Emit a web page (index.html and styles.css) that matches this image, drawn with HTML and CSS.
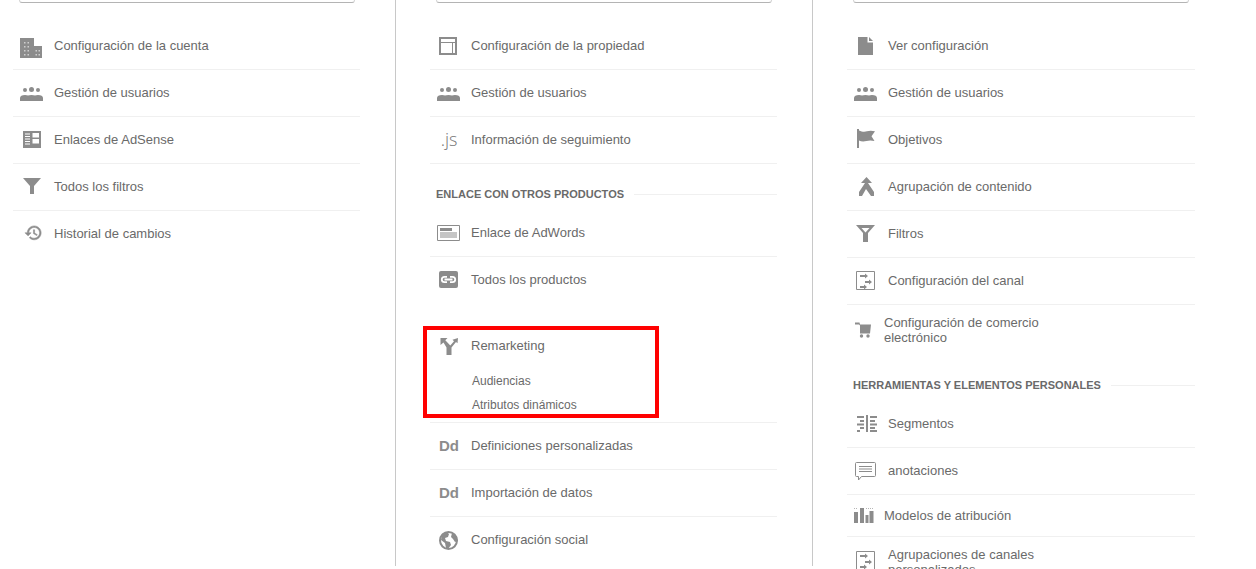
FILE: index.html
```html
<!DOCTYPE html>
<html lang="es">
<head>
<meta charset="utf-8">
<title>Administrar</title>
<link rel="stylesheet" href="styles.css">
</head>
<body>
<svg class="sprite" xmlns="http://www.w3.org/2000/svg">
  <symbol id="i-building" viewBox="0 0 24 24">
    <path fill="#8c8c8c" d="M0 4h14v8h8v12H0z"/>
    <path fill="#cfcfcf" d="M4 8h1.500v1.500H4zM7.500 8H9v1.500H7.500zM4 12h1.500v1.500H4zM7.500 12H9v1.500H7.500zM4 16h1.500v1.500H4zM7.500 16H9v1.500H7.500zM4 20h1.500v1.500H4zM7.500 20H9v1.500H7.500zM15.500 16H17v1.500h-1.500zM18.500 16H20v1.500h-1.500zM15.500 20H17v1.500h-1.500zM18.500 20H20v1.500h-1.500z"/>
  </symbol>
  <symbol id="i-users" viewBox="0 0 24 24">
    <circle fill="#8c8c8c" cx="5" cy="9" r="2"/><circle fill="#8c8c8c" cx="11.500" cy="8.500" r="2.500"/><circle fill="#8c8c8c" cx="18" cy="9" r="2"/>
    <path fill="#8c8c8c" d="M0 20v-3c0-2 2-3 5-3 1.300 0 2.300.2 3 .5.900-.4 2.100-.6 3.500-.6s2.600.2 3.500.6c.7-.3 1.700-.5 3-.5 3 0 5 1 5 3v3z"/>
  </symbol>
  <symbol id="i-adsense" viewBox="0 0 24 24">
    <path fill="#8c8c8c" d="M3 3h18v17H3z"/>
    <path fill="#fff" d="M5 5.500h5v1H5zM5 8h5v1H5zM5 10.500h5v1H5zM5 13h5v1H5zM5 15.500h5v1H5zM12.500 5h6.500v4.500h-6.500zM12.500 11h6.500v4.500h-6.500z"/>
  </symbol>
  <symbol id="i-funnel" viewBox="0 0 24 24">
    <path fill="#8c8c8c" d="M3 3h18l-7 8v8h-4v-8z"/>
  </symbol>
  <symbol id="i-history" viewBox="0 0 24 24">
    <g transform="translate(4.200 1.600) scale(.77)">
      <path fill="#8c8c8c" stroke="#8c8c8c" stroke-width=".7" d="M13 3c-4.970 0-9 4.030-9 9H1l3.890 3.890.07.14L9 12H6c0-3.870 3.130-7 7-7s7 3.130 7 7-3.130 7-7 7c-1.930 0-3.680-.79-4.940-2.060l-1.420 1.420C8.270 19.990 10.510 21 13 21c4.970 0 9-4.030 9-9s-4.030-9-9-9zm-1 5v5l4.280 2.540.72-1.210-3.500-2.080V8H12z"/>
    </g>
  </symbol>
  <symbol id="i-property" viewBox="0 0 24 24">
    <path fill="none" stroke="#8c8c8c" stroke-width="2" d="M3 4h16v16H3z"/>
    <path fill="none" stroke="#8c8c8c" d="M3 8.500h16M15.500 8.500V20"/>
  </symbol>
  <symbol id="i-adwords" viewBox="0 0 24 24">
    <path fill="none" stroke="#8c8c8c" d="M.5 4.500h22v15H.5z"/>
    <path fill="#8c8c8c" d="M3 7h12v3H3z"/>
    <path fill="#8c8c8c" d="M3 11.500h17v1H3zM3 13.500h17v1H3zM3 15.500h17v1H3z"/>
  </symbol>
  <symbol id="i-link" viewBox="0 0 24 24">
    <rect fill="#8c8c8c" x="2" y="3" width="19" height="17" rx="2"/>
    <path fill="none" stroke="#fff" stroke-width="1.800" d="M10 8.800H7.500a2.700 2.700 0 0 0 0 5.400H10M13 8.800h2.500a2.700 2.700 0 0 1 0 5.400H13M7.500 11.500h8"/>
  </symbol>
  <symbol id="i-remarketing" viewBox="0 0 24 24">
    <path fill="#8c8c8c" d="M3.500 5h7L8.300 7.200l5 5.300 3.700-4.300-1.500-1.500 5.500-1.700-.5 5.200-1.500-1.300-4.500 5.500V22h-5v-7.500L6.500 9.500 3.500 12z"/>
  </symbol>
  <symbol id="i-globe" viewBox="0 0 24 24">
    <circle fill="#fff" stroke="#8c8c8c" stroke-width="2" cx="11.500" cy="12.500" r="8.500"/>
    <path fill="#8c8c8c" d="M5 6l5-2 2 2-1 3-3 1 1 3 4 1 1 3-3 4-2-1-1-5-4-3zM15 5l4 3 2 5-3 1-2-3-2-2z"/>
  </symbol>
  <symbol id="i-doc" viewBox="0 0 24 24">
    <path fill="#8c8c8c" d="M4 3h9.500v5.500H19V21H4zM15 3l4 4h-4z"/>
  </symbol>
  <symbol id="i-flag" viewBox="0 0 24 24">
    <path fill="#8c8c8c" d="M3 1h2v19H3zM5 2.500c3 1.500 6 1.500 8 .8 2-.7 5-.8 8 0l-3.500 5 3 4.700c-3-.8-5.500-.8-8 0-3 .8-5.500.5-7.500-.5z"/>
  </symbol>
  <symbol id="i-merge" viewBox="0 0 24 24">
    <path fill="#8c8c8c" d="M12.500 2l5.500 6h-4l6 9v4h-3l-5-7-4 7H5v-4l6-9H7z"/>
  </symbol>
  <symbol id="i-funnel-line" viewBox="0 0 24 24">
    <path fill-rule="evenodd" fill="#8c8c8c" d="M2 3h19l-7 8v9h-5v-9zM7.500 6h8l-4 4.500z"/>
  </symbol>
  <symbol id="i-channel" viewBox="0 0 24 24">
    <path fill="none" stroke="#8c8c8c" d="M2.500 2.500h18v18h-18z"/>
    <path fill="#8c8c8c" d="M6 6h5V4.500l3 2.500-3 2.500V8H6zM11 12h4v-1.500l3 2.500-3 2.500V14h-4zM6 17h4v-1.500l3 2.500-3 2.500V19H6z"/>
  </symbol>
  <symbol id="i-cart" viewBox="0 0 24 24">
    <path fill="#8c8c8c" d="M1 4.500h4.500l.5 2h11l-1 9H6V7.500L5 6.500H1z"/>
    <circle fill="#8c8c8c" cx="7.500" cy="18" r="1.700"/><circle fill="#8c8c8c" cx="14" cy="18" r="1.700"/>
  </symbol>
  <symbol id="i-segments" viewBox="0 0 24 24">
    <path fill="#8c8c8c" d="M12 3h2v17h-2zM3 4h7v2H3zM6 8h4v2H6zM3 11.500h7v2H3zM6 15h4v2H6zM3 18h3v2H3zM16 4h7v2h-7zM16 8h5v2h-5zM16 11.500h7v2h-7zM16 15h5v2h-5zM16 18h7v2h-7z"/>
  </symbol>
  <symbol id="i-note" viewBox="0 0 24 24">
    <path fill="none" stroke="#8c8c8c" d="M2.500 3.500h18a1 1 0 0 1 1 1v12a1 1 0 0 1-1 1h-13l-3 3.500v-3.500h-2a1 1 0 0 1-1-1v-12a1 1 0 0 1 1-1z"/>
    <path fill="#8c8c8c" d="M5 7h13v1H5zM5 9.500h13v1H5zM5 12h13v1H5z"/>
  </symbol>
  <symbol id="i-attrib" viewBox="0 0 24 24">
    <path fill="#8c8c8c" d="M0 8h4v11H0zM6 4h4v15H6zM11.500 11h3v8h-3zM15.500 7h4v12h-4z"/>
    <path fill="#b5b5b5" d="M0 4h1v1H0zM2 4h1v1H2zM12 4h1v1h-1zM14 4h1v1h-1zM16 4h1v1h-1zM18 4h1v1h-1z"/>
  </symbol>
</svg>

<main class="columns">
  <section class="column">
    <div class="search"></div>
    <ul class="menu">
      <li class="row"><svg class="icon"><use href="#i-building"/></svg><a class="label">Configuración de la cuenta</a></li>
      <li class="row"><svg class="icon"><use href="#i-users"/></svg><a class="label">Gestión de usuarios</a></li>
      <li class="row"><svg class="icon"><use href="#i-adsense"/></svg><a class="label">Enlaces de AdSense</a></li>
      <li class="row"><svg class="icon"><use href="#i-funnel"/></svg><a class="label">Todos los filtros</a></li>
      <li class="row row-plain"><svg class="icon"><use href="#i-history"/></svg><a class="label">Historial de cambios</a></li>
    </ul>
  </section>

  <section class="column">
    <div class="search"></div>
    <ul class="menu">
      <li class="row"><svg class="icon"><use href="#i-property"/></svg><a class="label">Configuración de la propiedad</a></li>
      <li class="row"><svg class="icon"><use href="#i-users"/></svg><a class="label">Gestión de usuarios</a></li>
      <li class="row"><span class="icon glyph-js">.js</span><a class="label">Información de seguimiento</a></li>
    </ul>
    <h2 class="heading">Enlace con otros productos</h2>
    <ul class="menu">
      <li class="row"><svg class="icon"><use href="#i-adwords"/></svg><a class="label">Enlace de AdWords</a></li>
      <li class="row row-plain"><svg class="icon"><use href="#i-link"/></svg><a class="label">Todos los productos</a></li>
    </ul>
    <div class="group">
      <div class="row row-plain row-flush"><svg class="icon"><use href="#i-remarketing"/></svg><a class="label">Remarketing</a></div>
      <a class="sub">Audiencias</a>
      <a class="sub">Atributos dinámicos</a>
      <div class="highlight"></div>
    </div>
    <ul class="menu">
      <li class="row"><span class="icon glyph-dd">Dd</span><a class="label">Definiciones personalizadas</a></li>
      <li class="row"><span class="icon glyph-dd">Dd</span><a class="label">Importación de datos</a></li>
      <li class="row row-plain"><svg class="icon"><use href="#i-globe"/></svg><a class="label">Configuración social</a></li>
    </ul>
  </section>

  <section class="column column-last">
    <div class="search"></div>
    <ul class="menu">
      <li class="row"><svg class="icon"><use href="#i-doc"/></svg><a class="label">Ver configuración</a></li>
      <li class="row"><svg class="icon"><use href="#i-users"/></svg><a class="label">Gestión de usuarios</a></li>
      <li class="row"><svg class="icon"><use href="#i-flag"/></svg><a class="label">Objetivos</a></li>
      <li class="row"><svg class="icon"><use href="#i-merge"/></svg><a class="label">Agrupación de contenido</a></li>
      <li class="row"><svg class="icon"><use href="#i-funnel-line"/></svg><a class="label">Filtros</a></li>
      <li class="row"><svg class="icon"><use href="#i-channel"/></svg><a class="label">Configuración del canal</a></li>
      <li class="row row-plain row-wrap row-narrow row-flush"><svg class="icon"><use href="#i-cart"/></svg><a class="label">Configuración de comercio electrónico</a></li>
    </ul>
    <h2 class="heading">Herramientas y elementos personales</h2>
    <ul class="menu">
      <li class="row"><svg class="icon"><use href="#i-segments"/></svg><a class="label">Segmentos</a></li>
      <li class="row"><svg class="icon"><use href="#i-note"/></svg><a class="label">anotaciones</a></li>
      <li class="row row-short row-narrow row-flush"><svg class="icon"><use href="#i-attrib"/></svg><a class="label">Modelos de atribución</a></li>
      <li class="row row-wrap row-top row-flush"><svg class="icon"><use href="#i-channel"/></svg><a class="label">Agrupaciones de canales personalizados</a></li>
    </ul>
  </section>
</main>
</body>
</html>
```

FILE: styles.css
```css
* {
  box-sizing: border-box;
}

html,
body {
  margin: 0;
  height: 100%;
  overflow: hidden;
  background: #fff;
}

body {
  font-family: "Liberation Sans", Arial, sans-serif;
  font-size: 13px;
  color: #6a6a6a;
}

.sprite {
  display: none;
}

.columns {
  display: flex;
  margin-top: -27px;
  height: 593px;
}

.column {
  flex: none;
  width: 417px;
  padding: 0 35px 0 34px;
  border-right: 1px solid #c8c8c8;
}

.column:first-child {
  width: 396px;
  padding-left: 13px;
}

.column-last {
  border-right: 0;
}

.search {
  width: 336px;
  height: 30px;
  margin: 0 0 20px 6px;
  border: 1px solid #d4d4d4;
  border-bottom-color: #b4b4b4;
  border-radius: 3px;
}

.menu {
  list-style: none;
  margin: 0;
  padding: 0;
}

.row {
  display: flex;
  align-items: center;
  height: 47px;
  border-bottom: 1px solid #f0f0f0;
}

.row-plain {
  border-bottom-color: transparent;
}

.row-wrap {
  height: 50px;
  border-bottom: 0;
}

.row-short {
  height: 42px;
}

.row-top {
  align-items: flex-start;
  padding-top: 10px;
}

.row-top .icon {
  margin-top: 2px;
}

.icon {
  flex: none;
  display: block;
  width: 24px;
  height: 24px;
  margin: 0 10px 0 7px;
  overflow: visible;
}

.row-narrow .icon {
  margin-right: 6px;
}

.label {
  max-width: 200px;
  line-height: 15px;
  position: relative;
  top: -1px;
}

.row-flush .label {
  top: 0;
}

.glyph-js {
  font-family: "Open Sans", sans-serif;
  font-weight: 300;
  font-size: 18px;
  line-height: 22px;
  color: #777;
  text-align: center;
}

.glyph-dd {
  font-weight: 700;
  font-size: 15px;
  line-height: 24px;
  color: #8c8c8c;
  text-align: center;
}

.heading {
  display: flex;
  align-items: center;
  gap: 10px;
  height: 46px;
  margin: 0;
  padding: 23px 0 9px 6px;
  font-size: 11px;
  font-weight: 700;
  line-height: 14px;
  text-transform: uppercase;
  white-space: nowrap;
  color: #6a6a6a;
}

.heading::after {
  content: "";
  flex: 1;
  height: 1px;
  background: #f0f0f0;
}

.group {
  position: relative;
  margin-top: 18px;
  padding-bottom: 5px;
  border-bottom: 1px solid #f0f0f0;
}

.sub {
  display: block;
  height: 24px;
  padding-left: 42px;
  font-size: 12px;
  line-height: 24px;
}

.highlight {
  position: absolute;
  left: -7px;
  top: 4px;
  width: 236px;
  height: 92px;
  border: 4px solid #f00;
}
```
